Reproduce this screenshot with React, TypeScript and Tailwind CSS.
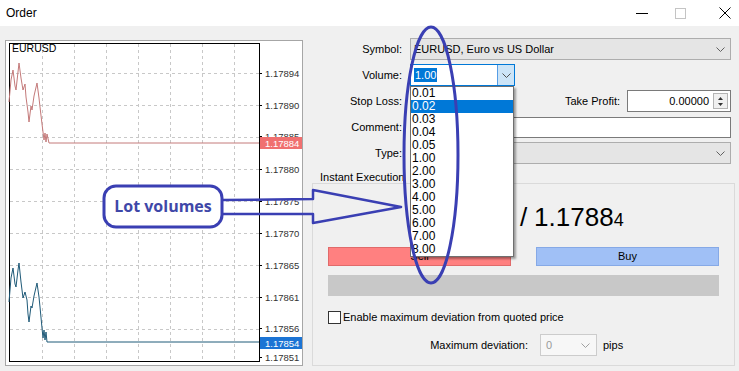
import React from 'react';

const volumes = ['0.01', '0.02', '0.03', '0.04', '0.05', '1.00', '2.00', '3.00', '4.00', '5.00', '6.00', '7.00', '8.00'];

const axis = [
  { v: '1.17894', y: 73 },
  { v: '1.17890', y: 105 },
  { v: '1.17885', y: 136 },
  { v: '1.17880', y: 169 },
  { v: '1.17875', y: 201 },
  { v: '1.17870', y: 233 },
  { v: '1.17865', y: 265 },
  { v: '1.17861', y: 297 },
  { v: '1.17856', y: 328 },
  { v: '1.17851', y: 357 },
];

const hLines = [73, 105, 137, 169, 201, 233, 265, 297, 329];
const vLines = [42, 74, 106, 138, 170, 202, 234];

const redPts =
  '9,102 11,80 13,70 15,86 16,90 18,72 19,63 21,78 23,90 25,84 26,97 28,112 29,122 31,106 32,110 34,96 37,83 39,98 40,107 42,124 43,132 44,140 45,133 46,142 47,134 49,143 50,143 259,143';
const bluePts =
  '9,302 11,278 13,268 15,284 16,287 18,270 19,263 21,282 23,298 25,292 27,300 28,314 29,322 31,306 32,308 34,296 37,283 39,297 40,307 42,328 43,338 44,330 45,340 46,332 47,342 50,342 259,342';

const Chevron = ({ className = '' }: { className?: string }) => (
  <svg width="9" height="5" viewBox="0 0 9 5" className={className}>
    <path d="M0.5 0.5L4.5 4.5L8.5 0.5" fill="none" stroke="currentColor" strokeWidth="1" />
  </svg>
);

const Row = ({ label, children }: { label: string; children?: React.ReactNode }) => (
  <div className="flex h-[22px] items-center">
    <div className="w-[100px] pr-[1px] text-right text-[11px]">{label}</div>
    <div className="ml-[7px] mr-[8px] flex h-full flex-1 items-center">{children}</div>
  </div>
);

const Chart = () => (
  <div className="h-[326px] w-[298px] border border-[#a6a6a6] bg-white">
    <svg width="296" height="324" viewBox="6 41 296 324" className="block">
      {hLines.map((y) => (
        <line key={'h' + y} x1="10" x2="259" y1={y + 0.5} y2={y + 0.5} stroke="#c8c8c8" strokeDasharray="3 3" />
      ))}
      {vLines.map((x) => (
        <line key={'v' + x} x1={x + 0.5} x2={x + 0.5} y1="44" y2="361" stroke="#c8c8c8" strokeDasharray="3 3" />
      ))}
      <rect x="9.5" y="43.5" width="250" height="318" fill="none" stroke="#000" />
      <text x="12" y="52" fontSize="10.5" fill="#000" fontFamily="Liberation Sans, Arial, sans-serif">
        EURUSD
      </text>
      <polyline points={redPts} fill="none" stroke="#c47a7a" strokeWidth="1" />
      <polyline points={bluePts} fill="none" stroke="#1f5a78" strokeWidth="1" />
      {axis.map((a) => (
        <g key={a.v}>
          <line x1="259" x2="262" y1={a.y + 0.5} y2={a.y + 0.5} stroke="#000" />
          <text
            x="265"
            y={a.y + 3.5}
            fontSize="9.5"
            fill="#333"
            fontFamily="Liberation Sans, Arial, sans-serif"
          >
            {a.v}
          </text>
        </g>
      ))}
      <rect x="260" y="137" width="42" height="12" fill="#f07070" />
      <text x="265" y="146.5" fontSize="9.5" fill="#fff" fontFamily="Liberation Sans, Arial, sans-serif">
        1.17884
      </text>
      <rect x="260" y="337" width="42" height="12" fill="#1c74d4" />
      <text x="265" y="346.5" fontSize="9.5" fill="#fff" fontFamily="Liberation Sans, Arial, sans-serif">
        1.17854
      </text>
    </svg>
  </div>
);

const VolumeBox = () => (
  <div className="relative h-[22px] w-[105px]">
    <div className="flex h-full w-full items-center border border-[#0078d7] bg-white">
      <span className="ml-[3px] bg-[#0078d7] px-[1px] text-[11px] leading-[14px] text-white">1.00</span>
      <div className="ml-auto flex h-full w-[17px] items-center justify-center border-l border-[#569de5] bg-[#cce4f7] text-[#505050]">
        <Chevron />
      </div>
    </div>
    <div className="absolute left-0 top-full z-20 w-[104px] border border-[#6f6f6f] bg-white shadow-[2px_2px_2px_rgba(0,0,0,0.35)]">
      {volumes.map((v) => (
        <div
          key={v}
          className={`h-[13px] pl-[1px] text-[12px] leading-[13px] ${v === '0.02' ? 'bg-[#0078d7] text-white' : 'text-black'}`}
        >
          {v}
        </div>
      ))}
    </div>
  </div>
);

export default function App() {
  return (
    <div className="relative h-[371px] w-[739px] overflow-hidden bg-[#f0f0f0] font-['Liberation_Sans',Arial,sans-serif] text-black">
      {/* title bar */}
      <div className="flex h-[26px] items-center bg-white pl-[6px] pr-[8px]">
        <span className="text-[12px]">Order</span>
        <div className="ml-auto flex items-center">
          <div className="h-px w-[12px] bg-black" />
          <div className="ml-[27px] h-[11px] w-[11px] border border-[#c4c4c4]" />
          <svg width="12" height="12" viewBox="0 0 12 12" className="ml-[33px]">
            <path d="M0.5 0.5L11.5 11.5M11.5 0.5L0.5 11.5" stroke="#000" strokeWidth="1" />
          </svg>
        </div>
      </div>

      <div className="flex h-[345px]">
        <div className="pl-[5px] pt-[14px]">
          <Chart />
        </div>

        <div className="flex flex-1 flex-col pt-[12px]">
          <div className="flex flex-col gap-[4px]">
            <Row label="Symbol:">
              <div className="flex h-full flex-1 items-center border border-[#adadad] bg-[#e5e5e5] pl-[3px] pr-[5px] text-[11px]">
                EURUSD, Euro vs US Dollar
                <Chevron className="ml-auto text-[#606060]" />
              </div>
            </Row>
            <div className="relative z-20">
              <Row label="Volume:">
                <VolumeBox />
              </Row>
            </div>
            <Row label="Stop Loss:">
              <div className="h-full w-[103px] border border-[#7a7a7a] bg-white" />
              <span className="ml-auto text-[11px]">Take Profit:</span>
              <div className="ml-[7px] flex h-full w-[104px] border border-[#7a7a7a] bg-white">
                <div className="flex flex-1 items-center justify-end pr-[4px] text-[11px]">0.00000</div>
                <div className="my-[2px] mr-[2px] flex w-[15px] flex-col items-center justify-center gap-[3px] border border-[#b4b4b4] bg-[#f0f0f0]">
                  <svg width="5" height="3" viewBox="0 0 5 3">
                    <path d="M0 3L2.5 0L5 3Z" fill="#333" />
                  </svg>
                  <svg width="5" height="3" viewBox="0 0 5 3">
                    <path d="M0 0L2.5 3L5 0Z" fill="#333" />
                  </svg>
                </div>
              </div>
            </Row>
            <Row label="Comment:">
              <div className="h-[21px] flex-1 border border-[#7a7a7a] bg-white" />
            </Row>
            <Row label="Type:">
              <div className="flex h-full flex-1 items-center border border-[#adadad] bg-[#e5e5e5] pr-[5px]">
                <Chevron className="ml-auto text-[#606060]" />
              </div>
            </Row>
          </div>

          <div className="ml-[17px] mt-[8px] h-[11px] text-[11px] leading-[11px]">Instant Execution</div>
          <div className="mb-[5px] ml-[9px] mr-[4px] flex flex-1 flex-col border border-[#dadada] px-[15px]">
            <div className="mt-[18px] flex h-[30px] items-baseline justify-center text-[26px] leading-[30px]">
              <span>
                1.1785<span className="text-[18px]">4</span>
              </span>
              <span className="mx-[7px]">/</span>
              <span>
                1.1788<span className="text-[18px]">4</span>
              </span>
            </div>
            <div className="mt-[15px] grid h-[19px] grid-cols-2 gap-[25px] text-[11px]">
              <div className="flex items-center justify-center border border-[#e06a6a] bg-[#ff8080]">Sell</div>
              <div className="flex items-center justify-center border border-[#86a9e6] bg-[#a0c0f6]">Buy</div>
            </div>
            <div className="mt-[9px] h-[21px] bg-[#c8c8c8]" />
            <div className="mt-[15px] flex h-[13px] items-center text-[11px]">
              <div className="mr-[2px] h-[13px] w-[13px] border border-[#333] bg-white" />
              Enable maximum deviation from quoted price
            </div>
            <div className="mt-[10px] flex h-[22px] items-center text-[11px]">
              <div className="w-[200px] text-right">Maximum deviation:</div>
              <div className="ml-[12px] flex h-full w-[57px] items-center border border-[#cccccc] bg-[#f7f7f7] pl-[5px] pr-[6px] text-[#9a9a9a]">
                0
                <Chevron className="ml-auto text-[#a0a0a0]" />
              </div>
              <span className="ml-[6px]">pips</span>
            </div>
          </div>
        </div>
      </div>

      {/* annotation overlay */}
      <svg
        width="739"
        height="371"
        viewBox="0 0 739 371"
        className="pointer-events-none absolute inset-0 z-30"
      >
        <ellipse cx="431" cy="155" rx="27" ry="128" fill="none" stroke="#3a3fb3" strokeWidth="3" />
        <polyline
          points="222,200 313,199 313,190 401,207 313,223 313,214 222,214"
          fill="none"
          stroke="#3a3fb3"
          strokeWidth="2.5"
          strokeLinejoin="round"
        />
        <rect x="104" y="186" width="118" height="41" rx="12" fill="#fff" stroke="#3a3fb3" strokeWidth="3" />
        <text
          x="163"
          y="212"
          textAnchor="middle"
          fontSize="16"
          fontWeight="700"
          fill="#3f48a8"
          fontFamily="Open Sans, Arial, sans-serif"
        >
          Lot volumes
        </text>
      </svg>
    </div>
  );
}
